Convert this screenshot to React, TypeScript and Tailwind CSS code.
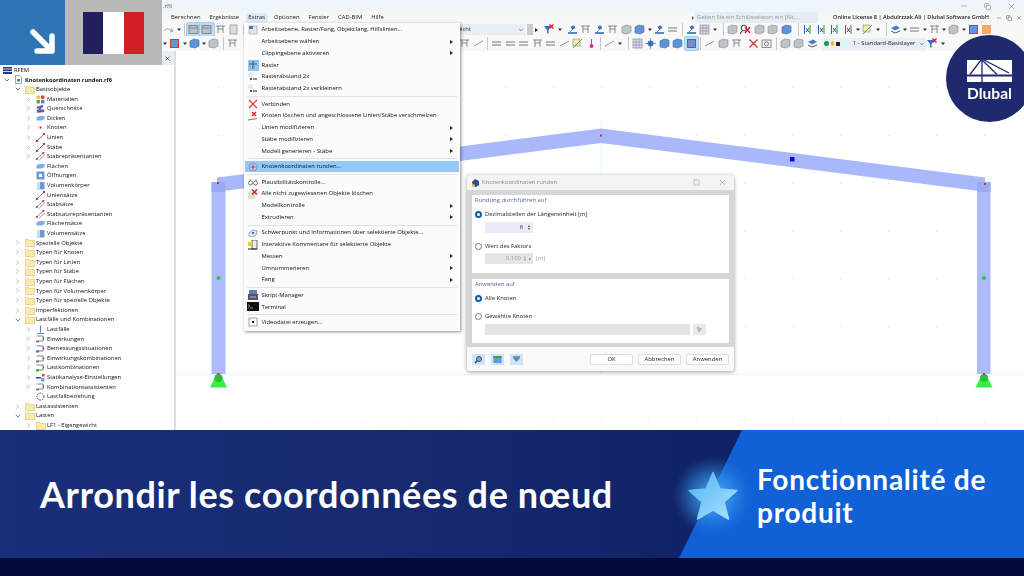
import React from "react";
import { ChevronRight, ChevronDown, Minus, Square, X, Copy } from "lucide-react";

const UI = "font-['Open_Sans','Noto_Sans',sans-serif]";

// ---------- small icons ----------
function Folder() {
	return (
		<svg width="10" height="9" viewBox="0 0 10 9">
			<path d="M.5 1.5h3l1 1h5v6h-9z" fill="#f8eaa8" stroke="#d9c581" strokeWidth=".7" />
		</svg>
	);
}

function TreeIcon({ k }: { k: string }) {
	const s = { width: 9, height: 9, viewBox: "0 0 9 9" };
	switch (k) {
		case "rfem":
			return (
				<svg width="9" height="7" viewBox="0 0 9 7">
					<rect width="9" height="7" fill="#27357f" />
					<path d="M0 2h9M0 4.5h9" stroke="#fff" strokeWidth=".8" />
				</svg>
			);
		case "file":
			return (
				<svg {...s}>
					<path d="M1.5.5h4l2 2v6h-6z" fill="#fff" stroke="#667" strokeWidth=".6" />
					<rect x="3" y="4" width="3" height="2.5" fill="#4c7fc0" />
				</svg>
			);
		case "mat":
			return (
				<svg {...s}>
					<rect x=".5" y=".5" width="3.4" height="3.4" fill="#e6c23c" />
					<rect x="5" y=".5" width="3.4" height="3.4" fill="#d6473f" />
					<rect x=".5" y="5" width="3.4" height="3.4" fill="#4fa84f" />
					<rect x="5" y="5" width="3.4" height="3.4" fill="#5c7fd0" />
				</svg>
			);
		case "qs":
			return (
				<svg {...s}>
					<path d="M1 3l6-2v2L5 4v2l3-.5V8L1 8.500V6l2-.5V4l-2 .5z" fill="#3b6fd0" stroke="#c33" strokeWidth=".4" />
				</svg>
			);
		case "plate":
			return (
				<svg {...s}>
					<path d="M.5 3.500L3 2h5.500v3L6 6.500H.5z" fill="#7eaee8" />
				</svg>
			);
		case "node":
			return (
				<svg {...s}>
					<rect x="3.500" y="3.500" width="2" height="2" fill="#d8263c" />
				</svg>
			);
		case "line":
			return (
				<svg {...s}>
					<path d="M1 8L8 1" stroke="#555" strokeWidth=".8" />
					<rect x="0" y="7" width="2" height="2" fill="#d8263c" />
					<rect x="7" y="0" width="2" height="2" fill="#d8263c" />
				</svg>
			);
		case "hole":
			return (
				<svg {...s}>
					<rect x=".5" y=".5" width="8" height="8" fill="#6d9ad6" />
					<rect x="3" y="3" width="3" height="3" fill="#fff" />
				</svg>
			);
		case "solid":
			return (
				<svg {...s}>
					<rect x="1" y="1" width="7.500" height="7.500" fill="#6d9ad6" />
					<rect x="1" y="1" width="3" height="7.500" fill="#c8dcf5" />
				</svg>
			);
		case "set":
			return (
				<svg {...s}>
					<path d="M1 7L7 1M3 8.500L8.500 3" stroke="#666" strokeWidth=".7" />
					<rect x="0" y="6" width="1.800" height="1.800" fill="#d8263c" />
					<rect x="6.500" y="0" width="1.800" height="1.800" fill="#d8263c" />
				</svg>
			);
		case "case":
			return (
				<svg {...s}>
					<path d="M4.500.5v7M1 8.500h7" stroke="#3c5ca8" strokeWidth=".8" />
				</svg>
			);
		case "act":
		case "act-m":
		case "act-g":
			return (
				<svg {...s}>
					<path d="M.5 2h6.500v5H.5" fill="none" stroke="#555" strokeWidth=".7" />
					<path d="M7 2.500l1.500 2-1.500 2z" fill={k === "act-m" ? "#d020c8" : k === "act-g" ? "#1caf2c" : "#3a7bd5"} />
					<rect x="0" y="6.500" width="3" height="2" fill={k === "act" ? "#888" : k === "act-m" ? "#2a7bd8" : "#1caf2c"} />
				</svg>
			);
		case "static":
			return (
				<svg {...s}>
					<rect x="0" y="4" width="5" height="1.500" fill="#2a4a9c" />
					<rect x="6" y="1" width="2.500" height="2.500" fill="#d8463c" />
					<rect x="5" y="5" width="3.500" height="3.500" fill="#7ea0e0" />
				</svg>
			);
		case "rel":
			return (
				<svg {...s}>
					<circle cx="4.500" cy="4.500" r="3.500" fill="none" stroke="#444" strokeWidth="1" strokeDasharray="1.500 1" />
				</svg>
			);
		default:
			return null;
	}
}

type Row = { t: string; l: number; i?: string; c?: "r" | "d"; b?: boolean };

const tree: Row[] = [
	{ t: "RFEM", l: 0, i: "rfem" },
	{ t: "Knotenkoordinaten runden.rf6", l: 1, i: "file", c: "d", b: true },
	{ t: "Basisobjekte", l: 2, c: "d" },
	{ t: "Materialien", l: 3, i: "mat", c: "r" },
	{ t: "Querschnitte", l: 3, i: "qs", c: "r" },
	{ t: "Dicken", l: 3, i: "plate", c: "r" },
	{ t: "Knoten", l: 3, i: "node", c: "r" },
	{ t: "Linien", l: 3, i: "line", c: "r" },
	{ t: "Stäbe", l: 3, i: "line", c: "r" },
	{ t: "Stabrepräsentanten", l: 3, i: "set", c: "r" },
	{ t: "Flächen", l: 3, i: "plate" },
	{ t: "Öffnungen", l: 3, i: "hole" },
	{ t: "Volumenkörper", l: 3, i: "solid" },
	{ t: "Liniensätze", l: 3, i: "line" },
	{ t: "Stabsätze", l: 3, i: "set" },
	{ t: "Stabsatzrepräsentanten", l: 3, i: "set" },
	{ t: "Flächensätze", l: 3, i: "plate" },
	{ t: "Volumensätze", l: 3, i: "solid" },
	{ t: "Spezielle Objekte", l: 2, c: "r" },
	{ t: "Typen für Knoten", l: 2, c: "r" },
	{ t: "Typen für Linien", l: 2, c: "r" },
	{ t: "Typen für Stäbe", l: 2, c: "r" },
	{ t: "Typen für Flächen", l: 2, c: "r" },
	{ t: "Typen für Volumenkörper", l: 2, c: "r" },
	{ t: "Typen für spezielle Objekte", l: 2, c: "r" },
	{ t: "Imperfektionen", l: 2, c: "r" },
	{ t: "Lastfälle und Kombinationen", l: 2, c: "d" },
	{ t: "Lastfälle", l: 3, i: "case", c: "r" },
	{ t: "Einwirkungen", l: 3, i: "act", c: "r" },
	{ t: "Bemessungssituationen", l: 3, i: "act-m", c: "r" },
	{ t: "Einwirkungskombinationen", l: 3, i: "act", c: "r" },
	{ t: "Lastkombinationen", l: 3, i: "act-g", c: "r" },
	{ t: "Statikanalyse-Einstellungen", l: 3, i: "static", c: "r" },
	{ t: "Kombinationsassistenten", l: 3, i: "act", c: "r" },
	{ t: "Lastfallbeziehung", l: 3, i: "rel" },
	{ t: "Lastassistenten", l: 2, c: "r" },
	{ t: "Lasten", l: 2, c: "d" },
	{ t: "LF1 - Eigengewicht", l: 3, c: "r" },
];

const indent: Record<number, string> = { 0: "pl-[3px]", 1: "pl-[3px]", 2: "pl-[14px]", 3: "pl-[25px]" };

function TreeRow({ r }: { r: Row }) {
	return (
		<div className={`flex h-[9.6px] shrink-0 items-center whitespace-nowrap ${indent[r.l]}`}>
			{r.l > 0 && (
				<span className="flex w-[11px] shrink-0 items-center justify-start text-[#555]">
					{r.c === "r" && <ChevronRight size={7} strokeWidth={1.5} />}
					{r.c === "d" && <ChevronDown size={8} strokeWidth={1.8} className="text-[#222]" />}
				</span>
			)}
			<span className="flex w-[11px] shrink-0 items-center">{r.i ? <TreeIcon k={r.i} /> : <Folder />}</span>
			<span className={r.b ? "text-[5.65px] font-bold text-[#111]" : "text-[#111]"}>{r.t}</span>
		</div>
	);
}

// ---------- toolbar glyphs ----------
function Glyph({ k }: { k: string }) {
	const s = { width: 11, height: 11, viewBox: "0 0 11 11" };
	switch (k) {
		case "doc":
			return <svg {...s}><rect x="2" y="1" width="7" height="9" fill="#ddd" stroke="#999" strokeWidth=".8" /></svg>;
		case "page":
			return <svg {...s}><rect x="1" y="1.500" width="9" height="8" fill="#b8c0cc" stroke="#777" strokeWidth=".8" /><path d="M1 4h9" stroke="#777" strokeWidth=".7" /></svg>;
		case "undo":
			return <svg {...s}><path d="M1 7q3-4 6-1l3 1M8 4l2 3-3 1" fill="none" stroke="#999" strokeWidth=".9" /></svg>;
		case "filter":
			return <svg {...s}><path d="M0 2h7L4.500 6v4L3 9V6z" fill="#2a6fd6" /><path d="M5.500.5l4 4m0-4l-4 4" stroke="#e11b2b" strokeWidth="1.400" /></svg>;
		case "search":
			return <svg {...s}><circle cx="4" cy="4" r="2.800" fill="none" stroke="#444" strokeWidth="1" /><path d="M2 7L0 10" stroke="#444" strokeWidth="1.200" /><path d="M5 3l5 6m0-6l-5 6" stroke="#e11b2b" strokeWidth="1.300" /></svg>;
		case "drop":
			return <svg width="6" height="11" viewBox="0 0 6 11"><path d="M1 4.500h4l-2 2.500z" fill="#333" /></svg>;
		case "truss":
			return <svg {...s}><path d="M1 2h9M3 2v7M8 2v7M3 5h5" stroke="#888" strokeWidth="1" fill="none" /></svg>;
		case "blueman":
			return <svg {...s}><path d="M1 9h9" stroke="#2a5cb0" strokeWidth="1.500" /><circle cx="6" cy="3.500" r="2" fill="#3f6fbf" /><path d="M3 8l3-3" stroke="#888" /></svg>;
		case "cube":
			return <svg {...s}><path d="M1 3l4-2 5 1v6l-4 2-5-1z" fill="#bcc4cc" stroke="#888" strokeWidth=".6" /></svg>;
		case "bluecube":
			return <svg {...s}><path d="M1 3l4-2 5 1v6l-4 2-5-1z" fill="#5f93d8" stroke="#3c6ab0" strokeWidth=".6" /></svg>;
		case "grid":
			return <svg {...s}><rect x="1" y="1" width="9" height="9" fill="#dde" stroke="#778" strokeWidth=".6" /><path d="M4 1v9M7 1v9M1 4h9M1 7h9" stroke="#778" strokeWidth=".5" /></svg>;
		case "x":
			return <svg {...s}><path d="M1.500 1.500l8 8m0-8l-8 8" stroke="#d8362a" strokeWidth="1.300" /></svg>;
		case "lines":
			return <svg {...s}><path d="M1 4h9M1 7h9" stroke="#777" strokeWidth="1" /></svg>;
		case "slant":
			return <svg {...s}><path d="M1 8l9-5" stroke="#999" strokeWidth="1" /></svg>;
		case "pink":
			return <svg {...s}><path d="M5.500 1v5" stroke="#e33" strokeWidth="1" /><circle cx="5.500" cy="8" r="2" fill="#e020b0" /></svg>;
		case "x-ax":
			return <svg {...s}><path d="M2.500 1v9" stroke="#2563c9" strokeWidth="1" /><path d="M8 1v9" stroke="#1f9a3a" strokeWidth="1" /><path d="M4 4l3 4m0-4l-3 4" stroke="#333" strokeWidth=".8" /></svg>;
		case "node3":
			return <svg {...s}><circle cx="5.500" cy="5.500" r="3" fill="#4c78d0" /><path d="M5.500 0v11M0 5.500h11" stroke="#3a5a9c" strokeWidth=".6" /></svg>;
		case "redblue":
			return <svg {...s}><rect x="1.500" y="1.500" width="8" height="8" fill="#6c90d8" stroke="#d8362a" strokeWidth="1" /></svg>;
		case "cam":
			return <svg {...s}><rect x="1" y="2" width="9" height="7.500" fill="#eee" stroke="#777" strokeWidth=".8" /><circle cx="5.500" cy="5.800" r="2" fill="none" stroke="#666" strokeWidth=".8" /></svg>;
		case "orange":
			return <svg {...s}><rect x="1" y="1" width="9" height="9" fill="#f2ab68" /></svg>;
		case "layers":
			return <svg {...s}><path d="M1 4l5-2.500L10 4 5 6.500z" fill="#4d7fb8" /><path d="M1 7l4 2 5-2" stroke="#555" fill="none" /></svg>;
		case "yellow":
			return <svg {...s}><rect x="1" y="1" width="7" height="7" fill="#ecec9a" stroke="#889" strokeWidth=".6" /><path d="M1 10l9-9" stroke="#888" /></svg>;
		case "sep":
			return <svg width="5" height="13" viewBox="0 0 5 13"><path d="M2.500 0v13" stroke="#bbb" strokeWidth=".8" /></svg>;
		default:
			return null;
	}
}

function Cell({ k, on }: { k: string; on?: boolean }) {
	if (k === "gap") return <span className="w-[3px] shrink-0" />;
	if (k === "drop" || k === "sep") return <Glyph k={k} />;
	return (
		<span className={`flex h-[13px] w-[13.5px] shrink-0 items-center justify-center rounded-[1px] ${on ? "bg-[#bcdcf8] ring-1 ring-[#a0ccf0]" : ""}`}>
			<Glyph k={k} />
		</span>
	);
}

const bar1a = ["undo", "drop", "sep", "page", "page", "truss", "doc", "doc"];
const bar1b = ["filter", "drop", "gap", "blueman", "truss", "blueman", "truss", "cube", "bluecube", "drop", "blueman", "lines", "sep", "blueman", "grid", "drop", "gap", "sep", "cube", "search", "cube", "cube", "bluecube", "gap", "sep", "x-ax", "x-ax", "x-ax", "x-ax", "drop", "yellow", "drop", "gap", "sep", "layers", "drop", "lines", "drop", "truss", "drop", "cube", "drop", "redblue", "orange"];
const bar2a = ["drop", "redblue", "drop", "bluecube", "drop", "cube", "sep", "truss"];
const bar2b = ["truss", "slant", "sep", "lines", "lines", "lines", "truss", "lines", "slant", "yellow", "pink", "sep", "slant", "drop", "gap", "sep", "grid", "node3", "bluecube", "bluecube", "redblue", "sep", "slant", "cube", "truss", "gap", "x", "cam", "sep", "cube", "cube", "layers"];

// ---------- menu ----------
type Item = { t?: string; i?: string; arrow?: boolean; sep?: boolean; hi?: boolean };
const menu: Item[] = [
	{ t: "Arbeitsebene, Raster/Fang, Objektfang, Hilfslinien...", i: "grid" },
	{ t: "Arbeitsebene wählen", arrow: true },
	{ t: "Clippingebene aktivieren", arrow: true },
	{ t: "Raster", i: "raster" },
	{ t: "Rasterabstand 2x", i: "dots" },
	{ t: "Rasterabstand 2x verkleinern", i: "dots" },
	{ sep: true },
	{ t: "Verbinden", i: "x" },
	{ t: "Knoten löschen und angeschlossene Linien/Stäbe verschmelzen", i: "delnode" },
	{ t: "Linien modifizieren", arrow: true },
	{ t: "Stäbe modifizieren", arrow: true },
	{ t: "Modell generieren - Stäbe", arrow: true },
	{ sep: true },
	{ t: "Knotenkoordinaten runden...", i: "round", hi: true },
	{ sep: true },
	{ t: "Plausibilitätskontrolle...", i: "glasses" },
	{ t: "Alle nicht zugewiesenen Objekte löschen", i: "delall" },
	{ t: "Modellkontrolle", arrow: true },
	{ t: "Extrudieren", arrow: true },
	{ sep: true },
	{ t: "Schwerpunkt und Informationen über selektierte Objekte...", i: "center" },
	{ t: "Interaktive Kommentare für selektierte Objekte", i: "comment" },
	{ t: "Messen", arrow: true },
	{ t: "Umnummerieren", arrow: true },
	{ t: "Fang", arrow: true },
	{ sep: true },
	{ t: "Skript-Manager", i: "script" },
	{ t: "Terminal", i: "term" },
	{ sep: true },
	{ t: "Videodatei erzeugen...", i: "video" },
];

function MenuIcon({ k }: { k: string }) {
	const s = { width: 10, height: 10, viewBox: "0 0 10 10" };
	switch (k) {
		case "grid":
			return <svg {...s}><rect x="1" y="1" width="8" height="8" fill="#dfe6ee" stroke="#889" strokeWidth=".5" /><rect x="1" y="1" width="4" height="3" fill="#4a78b0" /></svg>;
		case "raster":
			return <span className="flex h-[11px] w-[11px] items-center justify-center bg-[#8fc6f5]"><svg {...s}><path d="M5 1v8M1 4h8" stroke="#345" strokeWidth=".8" /><path d="M2 2h6M2 7h6" stroke="#567" strokeWidth=".6" strokeDasharray="1 1" /></svg></span>;
		case "dots":
			return <svg {...s}><path d="M1 1h3v3H1z" fill="none" stroke="#999" strokeWidth=".5" strokeDasharray="1 .5" /><path d="M5 7h4" stroke="#222" strokeWidth="1" /><circle cx="3" cy="7" r="1" fill="#222" /></svg>;
		case "x":
			return <svg {...s}><path d="M1 1l8 8m0-8l-8 8" stroke="#d8362a" strokeWidth="1.100" /></svg>;
		case "delnode":
			return <svg {...s}><path d="M0 9l9-1.500" stroke="#a33" strokeWidth=".8" /><path d="M4 1l4 4m0-4l-4 4" stroke="#e11b2b" strokeWidth="1.400" /></svg>;
		case "round":
			return <svg {...s}><circle cx="5" cy="5" r="4" fill="#a9d0f2" stroke="#778" strokeWidth=".6" /><path d="M5 2.500v5M2.500 5h5" stroke="#c03" strokeWidth=".7" /></svg>;
		case "glasses":
			return <svg {...s}><circle cx="2.500" cy="6" r="2" fill="none" stroke="#444" strokeWidth=".7" /><circle cx="7.500" cy="6" r="2" fill="none" stroke="#444" strokeWidth=".7" /><path d="M2 2v2M8 2v2" stroke="#444" strokeWidth=".6" /></svg>;
		case "delall":
			return <svg {...s}><rect x="0" y="3" width="7" height="7" fill="#cfe8cf" /><path d="M4 .5l5 5m0-5l-5 5" stroke="#e11b2b" strokeWidth="1.500" /></svg>;
		case "center":
			return <svg {...s}><path d="M1 5l4-3 4 1-1 4-4 2-3-1z" fill="#eef" stroke="#667" strokeWidth=".6" /><circle cx="5" cy="5" r="1.300" fill="#3a7bd5" /></svg>;
		case "comment":
			return <svg {...s}><rect x="4" y="0" width="5" height="9" fill="#eee" stroke="#333" strokeWidth=".7" /><rect x="0" y="2" width="4" height="4" fill="#e6d020" /><path d="M0 9h9" stroke="#222" /></svg>;
		case "script":
			return <svg {...s}><rect x="1" y="0" width="8" height="4" fill="#5d7fb0" /><rect x="0" y="4" width="10" height="6" fill="#556" /><path d="M2 7h6" stroke="#ccc" strokeWidth=".8" /></svg>;
		case "term":
			return <span className="flex h-[9px] w-[12px] items-center bg-[#111] pl-[1px]"><svg width="5" height="5" viewBox="0 0 5 5"><path d="M0 .5l2 1.500-2 1.500M2 4h3" stroke="#ddd" strokeWidth=".6" fill="none" /></svg></span>;
		case "video":
			return <svg {...s}><path d="M1 1h8v8H1z" fill="#fff" stroke="#666" strokeWidth=".6" /><path d="M1 0l2 2-2 2z" fill="#e6d020" /><rect x="4" y="4" width="2" height="2" fill="#222" /></svg>;
		default:
			return null;
	}
}

function ExtrasMenu() {
	return (
		<div className="absolute left-[244px] top-[23px] flex h-[308px] w-[216px] flex-col bg-[#fbfbfb] px-[1px] pt-[1px] text-[5.9px] text-[#111] shadow-[1px_1px_3px_rgba(0,0,0,0.45)]">
			{menu.map((m, i) =>
				m.sep ? (
					<div key={i} className="mx-[2px] my-[1.37px] h-[1px] shrink-0 bg-[#e2e2e2]" />
				) : (
					<div key={i} className={`flex h-[11.75px] shrink-0 items-center whitespace-nowrap ${m.hi ? "bg-[#92c9f8]" : ""}`}>
						<span className="flex w-[16.5px] shrink-0 items-center justify-center">{m.i && <MenuIcon k={m.i} />}</span>
						<span className="flex-1">{m.t}</span>
						{m.arrow && <span className="mr-[6px] h-0 w-0 border-y-[2.5px] border-l-[3px] border-y-transparent border-l-[#222]" />}
					</div>
				)
			)}
		</div>
	);
}

// ---------- dialog ----------
function Radio({ on }: { on?: boolean }) {
	return on ? (
		<span className="h-[7px] w-[7px] shrink-0 rounded-full border-[2px] border-[#0a5cb4] bg-white" />
	) : (
		<span className="h-[7px] w-[7px] shrink-0 rounded-full border border-[#777] bg-white" />
	);
}

function DlgButton({ children }: { children: React.ReactNode }) {
	return <span className="flex h-[11px] w-[43px] items-center justify-center rounded-[2px] border border-[#ddd] bg-white text-[#222]">{children}</span>;
}

function RoundDialog() {
	return (
		<div className="absolute left-[467px] top-[175px] flex h-[196px] w-[267px] flex-col overflow-hidden rounded-[3px] bg-[#d6d6d6] text-[5.9px] text-[#222] shadow-[0_1px_4px_rgba(0,0,0,0.4)]">
			<div className="flex h-[15px] shrink-0 items-center bg-[#f3f3f3] pl-[4px] text-[#888]">
				<svg width="9" height="10" viewBox="0 0 9 10" className="mr-[2px]"><path d="M1 4l3-3 4 2v4l-3 2-4-1z" fill="#2c4f8c" /><path d="M1 5l3 2 0 2-3-1z" fill="#e8b83c" /></svg>
				<span>Knotenkoordinaten runden</span>
				<span className="ml-auto flex items-center text-[#666]">
					<Square size={7} strokeWidth={1.2} className="mr-[18px]" />
					<X size={9} strokeWidth={1} className="mr-[7px]" />
				</span>
			</div>
			<div className="mx-[5px] mt-[5px] flex h-[78px] shrink-0 flex-col bg-white pl-[3px] pt-[1px]">
				<span className="h-[8px] leading-[8px] text-[#4f6594]">Rundung durchführen auf</span>
				<div className="mt-[6px] flex h-[9px] items-center gap-[3px]"><Radio on /><span>Dezimalstellen der Längeneinheit [m]</span></div>
				<div className="ml-[10px] mt-[3px] flex h-[11px] w-[48px] items-center justify-end gap-[5px] bg-[#e9e9f7] pr-[3px] text-[#222]">
					<span>6</span>
					<span className="flex flex-col gap-[1px]"><span className="h-0 w-0 border-x-[1.5px] border-b-[2px] border-x-transparent border-b-[#444]" /><span className="h-0 w-0 border-x-[1.5px] border-t-[2px] border-x-transparent border-t-[#444]" /></span>
				</div>
				<div className="mt-[9px] flex h-[9px] items-center gap-[3px]"><Radio /><span>Wert des Faktors</span></div>
				<div className="ml-[10px] mt-[2px] flex items-center gap-[3px]">
					<div className="flex h-[11px] w-[48px] items-center justify-end gap-[3px] bg-[#e4e4e4] pr-[2px] text-[#999]">
						<span>0.100</span>
						<span className="flex flex-col gap-[1px]"><span className="h-0 w-0 border-x-[1.5px] border-b-[2px] border-x-transparent border-b-[#999]" /><span className="h-0 w-0 border-x-[1.5px] border-t-[2px] border-x-transparent border-t-[#999]" /></span>
						<span className="h-0 w-0 border-y-[1.5px] border-l-[2px] border-y-transparent border-l-[#777]" />
					</div>
					<span className="text-[#999]">[m]</span>
				</div>
			</div>
			<div className="mx-[5px] mt-[6px] flex h-[64px] shrink-0 flex-col bg-white pl-[3px] pt-[1px]">
				<span className="h-[8px] leading-[8px] text-[#4f6594]">Anwenden auf</span>
				<div className="mt-[6px] flex h-[9px] items-center gap-[3px]"><Radio on /><span>Alle Knoten</span></div>
				<div className="mt-[9px] flex h-[9px] items-center gap-[3px]"><Radio /><span>Gewählte Knoten</span></div>
				<div className="ml-[10px] mt-[3px] flex gap-[3px]">
					<div className="h-[11px] w-[205px] bg-[#e4e4e4]" />
					<div className="flex h-[11px] w-[13px] items-center justify-center bg-[#eaeaea]"><svg width="7" height="7" viewBox="0 0 7 7"><path d="M1 1l5 2-2 1-1 2z" fill="#bbb" stroke="#999" strokeWidth=".5" /></svg></div>
				</div>
			</div>
			<div className="mt-[4px] flex flex-1 items-center bg-[#f9f9f9] px-[5px]">
				<span className="mr-[6px] flex h-[11px] w-[13px] items-center justify-center bg-[#cfe4f8]"><svg width="9" height="9" viewBox="0 0 9 9"><circle cx="5" cy="4" r="2.500" fill="#8ab" stroke="#234" strokeWidth=".8" /><path d="M3 6L1 8" stroke="#234" strokeWidth="1.200" /></svg></span>
				<span className="mr-[6px] flex h-[11px] w-[13px] items-center justify-center bg-[#cfe4f8]"><svg width="9" height="9" viewBox="0 0 9 9"><rect x=".5" y="1" width="8" height="7" fill="#5a9ad8" /><rect x=".5" y="1" width="8" height="2" fill="#3da04a" /></svg></span>
				<span className="flex h-[11px] w-[13px] items-center justify-center bg-[#cfe4f8]"><svg width="9" height="9" viewBox="0 0 9 9"><path d="M1 3h7L4.500 7z" fill="#5a8ab8" /><path d="M1 2h7" stroke="#345" /></svg></span>
				<span className="ml-auto flex gap-[5px]">
					<DlgButton>OK</DlgButton>
					<DlgButton>Abbrechen</DlgButton>
					<DlgButton>Anwenden</DlgButton>
				</span>
			</div>
		</div>
	);
}

// ---------- model drawing ----------
function Frame() {
	const xs = Array.from({ length: 18 }, (_, i) => 218 + i * 47.87);
	const ys = Array.from({ length: 8 }, (_, i) => 87.3 + i * 47.8);
	return (
		<svg className="block h-full w-full" viewBox="176 51 848 379" preserveAspectRatio="none">
			{xs.map((x) => ys.map((y) => <rect key={`${x}-${y}`} x={x} y={y} width="1" height="1" fill="#c9c9c9" />))}
			<path d="M176 374.500H1024" stroke="#e6fbfb" strokeWidth="1.500" />
			<path d="M601 120V374" stroke="#dff6f8" strokeWidth="1" />
			<path d="M211.500 182H225.500V374H211.500zM977 182H990.500V374H977z" fill="#adbbfb" />
			<path d="M217 177.600L601 128.600L985 177.600V191.700L601 143L217 191.700z" fill="#a9b8fb" />
			<rect x="211.500" y="182" width="13.500" height="10" fill="#9aabf6" />
			<rect x="977" y="182" width="13.500" height="10" fill="#9aabf6" />
			<rect x="600" y="134.500" width="2" height="2" fill="#f0203c" />
			<rect x="984" y="183" width="2" height="2" fill="#f0203c" />
			<rect x="217" y="182" width="2" height="2" fill="#f0203c" />
			<rect x="790" y="157" width="4.500" height="4.500" fill="#0a0ae6" />
			<circle cx="218.500" cy="278" r="2" fill="#22cc44" />
			<circle cx="984" cy="278" r="2" fill="#22cc44" />
			{[218.500, 984].map((x) => (
				<g key={x}>
					<path d={`M${x - 3.500} 377L${x - 8.500} 387.500H${x + 8.500}L${x + 3.500} 377z`} fill="#37ee45" />
					<circle cx={x} cy="378" r="4" fill="#22c23c" />
					<rect x={x - 1} y="373" width="2" height="2" fill="#f0203c" />
				</g>
			))}
		</svg>
	);
}

// ---------- overlays ----------
function CornerTiles() {
	return (
		<div className="absolute left-0 top-0 flex h-[65px]">
			<div className="w-[65px] bg-[#2e75b6] pl-[25px] pt-[24px]">
				<svg width="34" height="34" viewBox="0 0 34 34" className="block">
					<path d="M8 8L27 27M27 12V27H12" fill="none" stroke="#fff" strokeWidth="5.500" strokeLinecap="round" strokeLinejoin="round" />
				</svg>
			</div>
			<div className="flex w-[97px] items-center justify-center bg-[#b9b9b9]">
				<div className="flex h-[42px] w-[61px]">
					<div className="flex-1 bg-[#21205f]" />
					<div className="flex-1 bg-white" />
					<div className="flex-1 bg-[#d01f26]" />
				</div>
			</div>
		</div>
	);
}

function DlubalBadge() {
	return (
		<div className="absolute left-[946px] top-[35px] flex h-[87px] w-[87px] flex-col items-center rounded-full bg-[#1f2a6e] pt-[25px]">
			<svg width="45" height="22" viewBox="0 0 45 22">
				<rect width="45" height="22" fill="#fff" />
				<rect y="14.500" width="45" height="2" fill="#1f2a6e" />
				<path d="M14 0L3 14.500M15 0v22M15 0L30 14.500M17 0L42 13" stroke="#1f2a6e" strokeWidth="1.300" fill="none" />
			</svg>
			<span className="mt-[3px] font-['Lato',sans-serif] text-[15.5px] font-bold leading-[16px] text-white">Dlubal</span>
		</div>
	);
}

function Banner() {
	return (
		<div className="relative flex h-[128px] items-center bg-[linear-gradient(90deg,#1a2f7a_0%,#16296f_45%,#0b1a5c_100%)] font-['Lato',sans-serif] text-white">
			<div className="absolute inset-y-0 right-0 w-[345px] bg-[#1060d6] [clip-path:polygon(63px_0,100%_0,100%_100%,0_100%)]" />
			<h1 className="relative ml-[40px] whitespace-nowrap text-[36px] font-bold leading-none tracking-[0.62px]">Arrondir les coordonnées de nœud</h1>
			<div className="relative ml-auto flex items-center">
				<svg width="120" height="120" viewBox="0 0 120 120" className="-mr-[16px] mt-[4px]">
					<defs>
						<radialGradient id="glow">
							<stop offset="0%" stopColor="#57b4f5" stopOpacity="1" />
							<stop offset="55%" stopColor="#3a9df0" stopOpacity=".5" />
							<stop offset="100%" stopColor="#2a80e0" stopOpacity="0" />
						</radialGradient>
						<linearGradient id="star" x1="0" y1="0" x2="1" y2="1">
							<stop offset="0%" stopColor="#4cb2f2" />
							<stop offset="100%" stopColor="#b0e2ff" />
						</linearGradient>
					</defs>
					<circle cx="60" cy="60" r="40" fill="url(#glow)" />
					<path d="M60 36.500L67 53L84 54.500L71 66L75.500 83L60 74L44.500 83L49 66L36 54.500L53 53z" fill="url(#star)" stroke="url(#star)" strokeWidth="1.500" strokeLinejoin="round" />
				</svg>
				<div className="mt-[3px] w-[267px] text-[28px] font-bold leading-[33px] tracking-[0.75px]">
					Fonctionnalité de
					<br />
					produit
				</div>
			</div>
		</div>
	);
}

export default function App() {
	return (
		<div className="h-[576px] w-[1024px] overflow-hidden bg-white">
			<div className="h-[430px] overflow-hidden">
				<div className={`relative flex h-[430px] flex-col text-[5.85px] text-[#222] blur-[0.25px] ${UI}`}>
					{/* Title bar */}
					<div className="flex h-[12px] shrink-0 items-center bg-[#eef5fb] pl-[163px] text-[#555]">
						<span>.rf6</span>
						<span className="ml-auto flex items-center gap-[16px] pr-[8px] text-[#333]">
							<Minus size={8} strokeWidth={1} />
							<Copy size={7} strokeWidth={1.2} />
							<X size={9} strokeWidth={1} />
						</span>
					</div>
					{/* Menu row */}
					<div className="flex h-[11px] shrink-0 items-center bg-[#f7f7f7] pl-[171px]">
						<div className="flex w-[521px] gap-[9px] whitespace-nowrap">
							<span>Berechnen</span>
							<span>Ergebnisse</span>
							<span className="-mx-[2px] bg-[#d8eafa] px-[2px]">Extras</span>
							<span>Optionen</span>
							<span>Fenster</span>
							<span>CAD-BIM</span>
							<span>Hilfe</span>
						</div>
						<span className="mr-[1px] h-0 w-0 border-y-[2px] border-l-[2.5px] border-y-transparent border-l-[#555]" />
						<span className="flex h-[11px] w-[123px] items-center whitespace-nowrap bg-[#e6ecf6] pl-[2px] text-[#999]">Geben Sie ein Schlüsselwort ein [Alt...</span>
						<span className="ml-[15px] whitespace-nowrap text-[5.6px] font-semibold">Online License 8 | Abdulrzzak Ali | Dlubal Software GmbH</span>
						<span className="ml-auto flex items-center gap-[4px] pr-[2px]">
							<Minus size={6} strokeWidth={1.5} />
							<Copy size={6} strokeWidth={1.5} />
							<X size={6} strokeWidth={1.5} />
						</span>
					</div>
					{/* Toolbars */}
					<div className="flex h-[13px] shrink-0 items-center bg-[#f8f8f8] pl-[162px]">
						{bar1a.map((k, i) => <Cell key={i} k={k} on={i === 3 || i === 4} />)}
						<div className="ml-[146px] flex h-[11px] w-[125px] shrink-0 items-center justify-between whitespace-nowrap bg-[#e9edf6] pl-[21px] pr-[1px] text-[#222]">
							<span>LF1 - Eigengewicht</span>
							<ChevronDown size={6} />
						</div>
						<span className="ml-[2px] h-[11px] w-[6px] shrink-0 bg-[#ccc]" />
						<span className="ml-[2px] mr-[5px] h-0 w-0 border-y-[2px] border-l-[3px] border-y-transparent border-l-[#222]" />
						{bar1b.map((k, i) => <Cell key={i} k={k} />)}
					</div>
					<div className="flex h-[15px] shrink-0 items-center bg-[#f8f8f8] pl-[162px]">
						{bar2a.map((k, i) => <Cell key={i} k={k} />)}
						<div className="ml-[219px] flex items-center">
							{bar2b.map((k, i) => <Cell key={i} k={k} on={k === "redblue"} />)}
						</div>
						<div className="ml-[3px] flex h-[12px] w-[104px] shrink-0 items-center gap-[2px] whitespace-nowrap bg-[#e9edf6] pl-[2px]">
							<span className="h-[5px] w-[5px] rounded-full bg-[#1a9a3a]" />
							<span className="h-[5px] w-[3px] rounded-full bg-[#e6c020]" />
							<span className="h-[4px] w-[4px] bg-[#222]" />
							<span className="h-[6px] w-[6px] bg-[#d4fafa]" />
							<span className="ml-[3px]">1 - Standard-Basislayer</span>
							<ChevronDown size={6} className="ml-auto mr-[1px]" />
						</div>
						<Cell k="filter" />
						<Glyph k="drop" />
					</div>
					{/* Workspace */}
					<div className="flex min-h-0 flex-1 bg-white">
						<div className="flex w-[176px] shrink-0 flex-col border-r-[2px] border-[#dcdcdc]">
							<div className="flex h-[14px] shrink-0 items-center justify-end bg-[#e6edf6] pr-[3px] text-[#333]">
								<X size={7} strokeWidth={2} />
							</div>
							<div className="flex min-h-0 flex-1 flex-col overflow-hidden pt-[.5px]">
								{tree.map((r) => <TreeRow key={r.t + r.l + r.i} r={r} />)}
							</div>
						</div>
						<div className="min-w-0 flex-1">
							<Frame />
						</div>
					</div>
					<CornerTiles />
					<DlubalBadge />
					<ExtrasMenu />
					<RoundDialog />
				</div>
			</div>
			<Banner />
			<div className="h-[18px] bg-[#040b3a]" />
		</div>
	);
}
